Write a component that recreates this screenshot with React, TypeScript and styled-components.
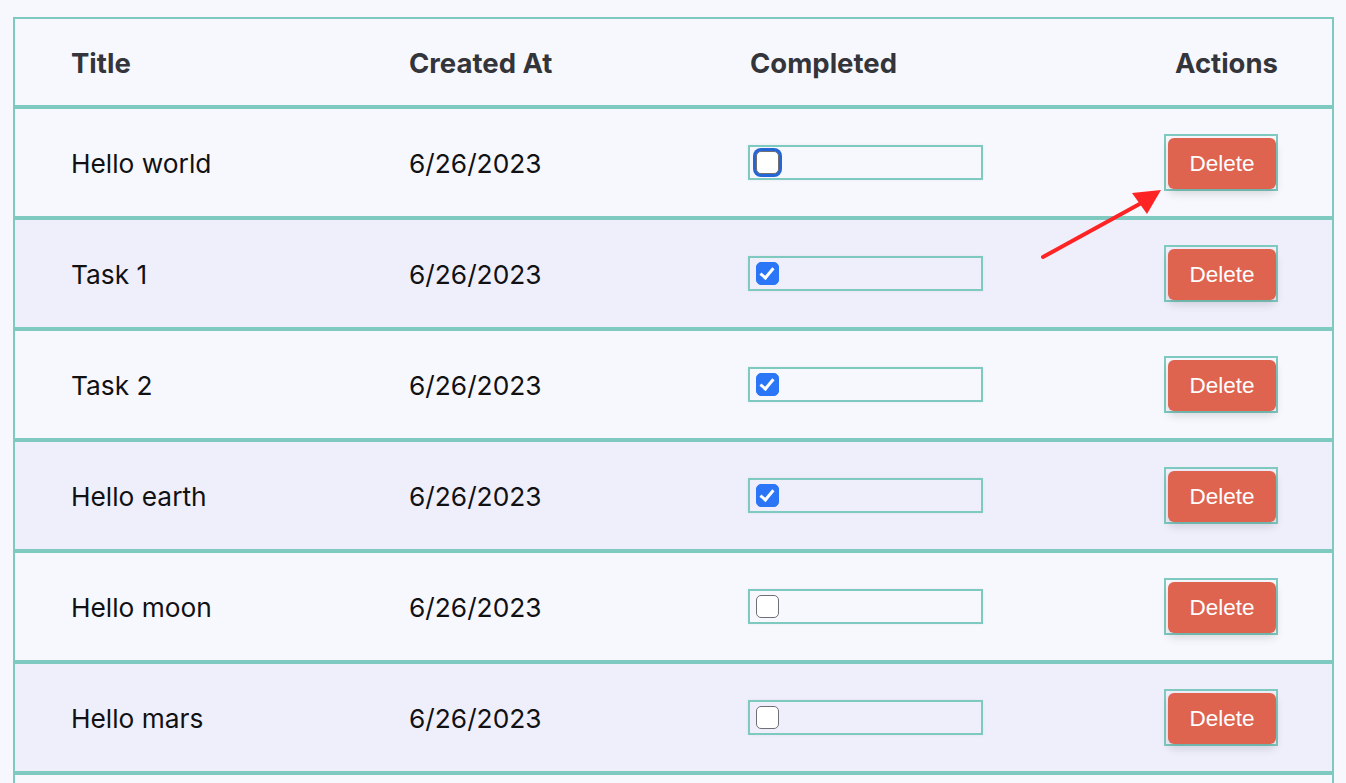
import React from "react";
import styled, { createGlobalStyle } from "styled-components";

const GlobalStyle = createGlobalStyle`
  html, body {
    margin: 0;
    padding: 0;
    background: #f7f8fe;
    overflow: hidden;
  }
  body {
    font-family: Inter, "Noto Sans", sans-serif;
  }
`;

const TEAL = "#7ec9c0";

const Page = styled.div`
  position: relative;
  padding: 17px 12px 0 13px;
  height: 783px;
  box-sizing: border-box;
  overflow: hidden;
`;

const Table = styled.div`
  display: flex;
  flex-direction: column;
`;

const Row = styled.div<{ $alt?: boolean; $header?: boolean }>`
  display: grid;
  grid-template-columns: 338px 341px 1fr auto;
  align-items: center;
  flex-shrink: 0;
  box-sizing: border-box;
  height: ${(p) => (p.$header ? "90px" : "111px")};
  padding: 0 54px 0 56px;
  border: 2px solid ${TEAL};
  background: ${(p) => (p.$alt ? "#efeffc" : "#f7f8fe")};
`;

const HeadCell = styled.div<{ $right?: boolean }>`
  font-size: 27.5px;
  font-weight: 700;
  color: #34353a;
  text-align: ${(p) => (p.$right ? "right" : "left")};
  padding-top: 2px;
`;

const Cell = styled.div`
  font-size: 26.3px;
  color: #111113;
  padding-top: 2px;
`;

const ActionCell = styled.div`
  display: flex;
  justify-content: flex-end;
`;

const CheckWrap = styled.div`
  display: flex;
  align-items: center;
  box-sizing: border-box;
  width: 235px;
  height: 35px;
  margin-left: -2px;
  padding-left: 6px;
  border: 2px solid ${TEAL};
  box-shadow: 0 0 3px rgba(0, 0, 0, 0.06);
`;

const Check = styled.input<{ $focused?: boolean }>`
  appearance: none;
  -webkit-appearance: none;
  position: relative;
  margin: 0;
  width: 23px;
  height: 23px;
  box-sizing: border-box;
  border-radius: 5px;
  border: 1.5px solid #6f6f74;
  background: #ffffff;
  box-shadow: ${(p) => (p.$focused ? "0 0 0 3px #2466d6" : "none")};
  &:checked {
    background: #2a76f6;
    border-color: #2a76f6;
  }
  &:checked::after {
    content: "";
    position: absolute;
    left: 6px;
    top: 1.5px;
    width: 5px;
    height: 11px;
    border: solid #ffffff;
    border-width: 0 3.5px 3.5px 0;
    transform: rotate(40deg);
  }
`;

const ButtonFrame = styled.div`
  box-sizing: border-box;
  padding: 2px 0 0 2px;
  border: 2px solid ${TEAL};
`;

const DeleteButton = styled.button`
  display: block;
  width: 108px;
  height: 51px;
  margin: 0;
  border: none;
  border-radius: 6px;
  background: #de6450;
  color: #ffffff;
  font-family: "Liberation Sans", Arial, sans-serif;
  font-size: 22.5px;
  box-shadow: 0 5px 9px rgba(0, 0, 0, 0.13);
  cursor: pointer;
`;

const Arrow = styled.svg`
  position: absolute;
  left: 0;
  top: 0;
  width: 1346px;
  height: 783px;
  pointer-events: none;
`;

type Todo = { title: string; date: string; done: boolean };

const todos: Todo[] = [
  { title: "Hello world", date: "6/26/2023", done: false },
  { title: "Task 1", date: "6/26/2023", done: true },
  { title: "Task 2", date: "6/26/2023", done: true },
  { title: "Hello earth", date: "6/26/2023", done: true },
  { title: "Hello moon", date: "6/26/2023", done: false },
  { title: "Hello mars", date: "6/26/2023", done: false },
];

export default function App() {
  return (
    <Page>
      <GlobalStyle />
      <Table>
        <Row $header>
          <HeadCell>Title</HeadCell>
          <HeadCell>Created At</HeadCell>
          <HeadCell>Completed</HeadCell>
          <HeadCell $right>Actions</HeadCell>
        </Row>
        {todos.map((t, i) => (
          <Row key={i} $alt={i % 2 === 1}>
            <Cell>{t.title}</Cell>
            <Cell>{t.date}</Cell>
            <div>
              <CheckWrap>
                <Check type="checkbox" defaultChecked={t.done} $focused={i === 0} />
              </CheckWrap>
            </div>
            <ActionCell>
              <ButtonFrame>
                <DeleteButton>Delete</DeleteButton>
              </ButtonFrame>
            </ActionCell>
          </Row>
        ))}
        <Row />
      </Table>
      <Arrow viewBox="0 0 1346 783">
        <line x1="1043" y1="257" x2="1145" y2="201" stroke="#ff2424" strokeWidth="4" strokeLinecap="round" />
        <polygon points="1161,190 1132,193 1147,214" fill="#ff2424" />
      </Arrow>
    </Page>
  );
}
